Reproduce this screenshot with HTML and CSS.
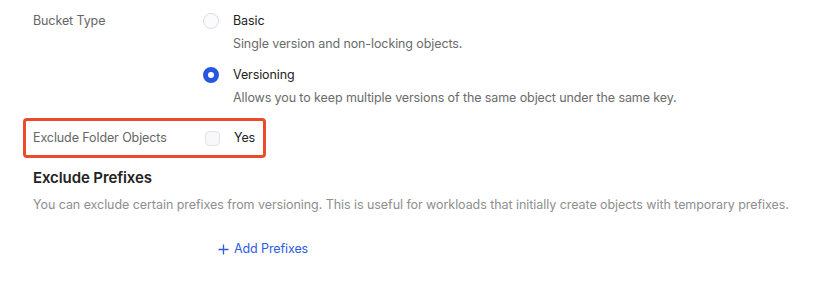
FILE: index.html
```html
<!DOCTYPE html>
<html>
<head>
<meta charset="utf-8">
<link rel="stylesheet" href="styles.css">
</head>
<body>
<div class="page">
  <div class="field">
    <div class="label">Bucket Type</div>
    <div class="options">
      <div class="option">
        <span class="radio"></span>
        <div class="opt-text">
          <div class="opt-title">Basic</div>
          <div class="opt-desc">Single version and non-locking objects.</div>
        </div>
      </div>
      <div class="option">
        <span class="radio checked"></span>
        <div class="opt-text">
          <div class="opt-title">Versioning</div>
          <div class="opt-desc">Allows you to keep multiple versions of the same object under the same key.</div>
        </div>
      </div>
    </div>
  </div>
  <div class="highlight">
    <div class="label">Exclude Folder Objects</div>
    <span class="checkbox"></span>
    <span class="yes">Yes</span>
  </div>
  <h3 class="section-title">Exclude Prefixes</h3>
  <p class="section-desc">You can exclude certain prefixes from versioning. This is useful for workloads that initially create objects with temporary prefixes.</p>
  <div class="add-row">
    <a class="add-link"><svg width="11" height="11" viewBox="0 0 11 11"><path d="M5.5 0.5V10.5M0.5 5.5H10.5" stroke="currentColor" stroke-width="1.3" fill="none"/></svg>Add Prefixes</a>
  </div>
</div>
</body>
</html>
```
FILE: styles.css
```css
* { box-sizing: border-box; }
html, body { margin: 0; padding: 0; background: #fff; }
body {
  font-family: Inter, "Noto Sans", sans-serif;
  font-size: 12.5px;
  letter-spacing: -0.1px;
  line-height: 20px;
  color: #222;
}
.page {
  padding: 11px 0 0 33px;
}
.field {
  display: flex;
}
.label {
  width: 170px;
  flex: none;
  color: #666;
}
.options {
  display: flex;
  flex-direction: column;
  gap: 11px;
}
.option {
  display: flex;
  gap: 14px;
}
.radio {
  flex: none;
  width: 16px;
  height: 16px;
  margin-top: 2px;
  border-radius: 50%;
  border: 1px solid #dcdde3;
  background: #fbfbfd;
}
.radio.checked {
  border: 5px solid #2a55e0;
  background: #fff;
}
.opt-title { color: #222; }
.opt-desc { color: #6b6b6b; margin-top: 3px; }
.highlight {
  display: flex;
  align-items: center;
  width: 243px;
  height: 40px;
  margin: 10px 0 0 -10px;
  padding-left: 7px;
  border: 3px solid #ec4a2c;
  border-radius: 4px;
}
.highlight .label { width: 172px; }
.checkbox {
  width: 15px;
  height: 15px;
  border: 1px solid #e2e3e8;
  border-radius: 4px;
  background: #f8f8fb;
  margin-right: 14px;
}
.yes { color: #222; }
.section-title {
  margin: 10px 0 0;
  font-size: 15px;
  line-height: 20px;
  font-weight: 600;
  letter-spacing: -0.1px;
  color: #222;
}
.section-desc {
  margin: 7px 0 0;
  letter-spacing: -0.06px;
  color: #8e8e8e;
}
.add-row {
  padding: 24px 0 0 185px;
}
.add-link {
  display: inline-flex;
  align-items: center;
  gap: 5px;
  color: #2d5be3;
  cursor: pointer;
}
```
